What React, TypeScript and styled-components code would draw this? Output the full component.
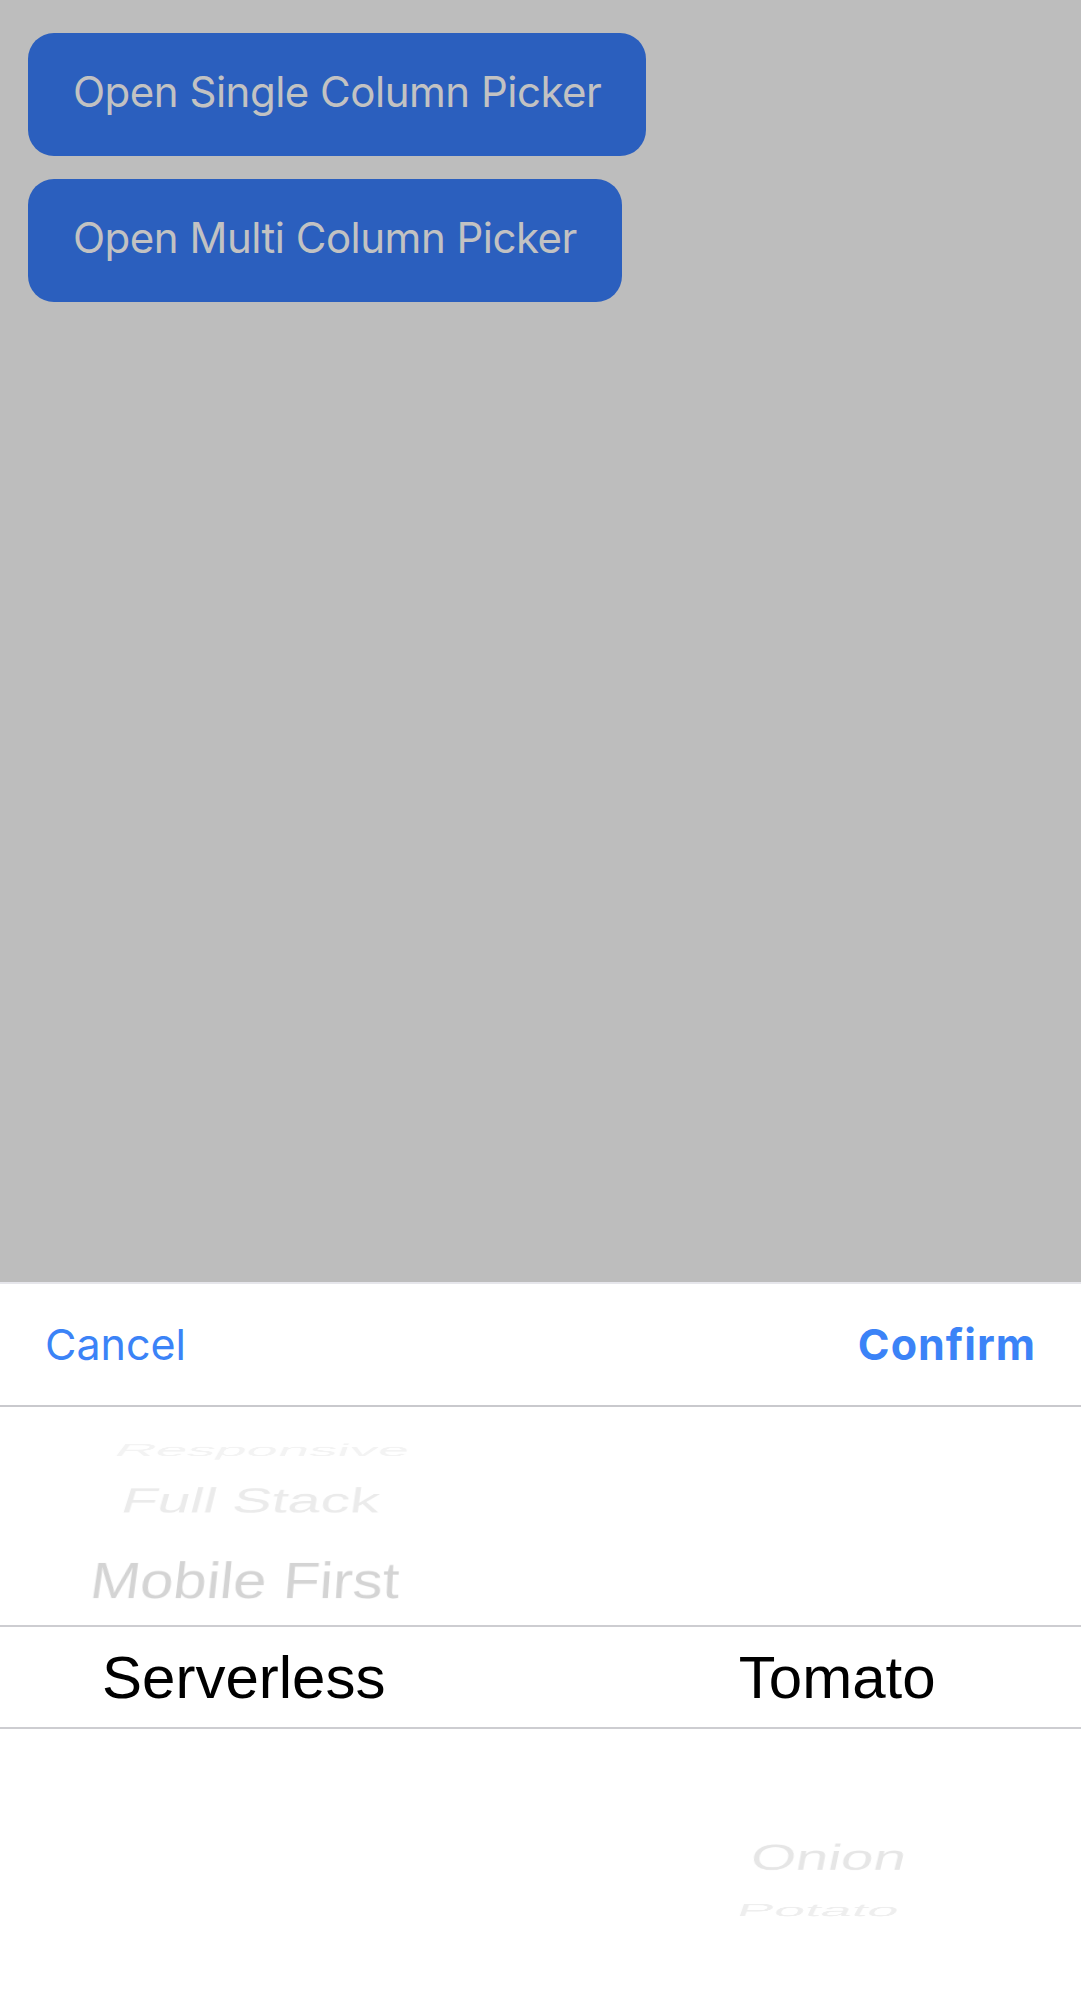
import React from "react";
import styled, { createGlobalStyle } from "styled-components";

const PERSPECTIVE = 1600;

const GlobalStyle = createGlobalStyle`
  html, body {
    margin: 0;
    padding: 0;
  }
  body {
    background: #bdbdbd;
    font-family: Inter, "Noto Sans", "Liberation Sans", sans-serif;
  }
  * {
    box-sizing: border-box;
  }
`;

const Page = styled.div`
  min-height: 100vh;
  display: flex;
  flex-direction: column;
  background: #bdbdbd;
`;

const ButtonStack = styled.div`
  display: flex;
  flex-direction: column;
  align-items: flex-start;
  gap: 23px;
  padding: 33px 0 0 28px;
`;

const ActionButton = styled.button`
  height: 123px;
  padding: 0 45px 6px;
  border: none;
  border-radius: 26px;
  background: #2b5fbe;
  color: #c2c2c2;
  font-family: Inter, "Noto Sans", sans-serif;
  font-size: 42px;
  font-weight: 400;
  letter-spacing: -0.5px;
  cursor: pointer;
`;

const Sheet = styled.div`
  margin-top: auto;
  background: #ffffff;
  border-top: 2px solid #e6e6eb;
  display: flex;
  flex-direction: column;
`;

const SheetHeader = styled.div`
  height: 123px;
  display: flex;
  align-items: center;
  justify-content: space-between;
  padding: 0 45px 2px;
  border-bottom: 2px solid #c9c9cd;
`;

const HeaderAction = styled.button<{ $strong?: boolean }>`
  background: none;
  border: none;
  padding: 0;
  color: #3b83f7;
  font-family: Inter, "Noto Sans", sans-serif;
  font-size: 43px;
  font-weight: ${(p) => (p.$strong ? 700 : 400)};
  letter-spacing: ${(p) => (p.$strong ? "1px" : "0")};
  cursor: pointer;
`;

const WheelBody = styled.div`
  height: 592px;
  display: grid;
  grid-template-columns: 1fr 1fr;
  grid-template-rows: 218px 104px 1fr;
  column-gap: 106px;
  perspective: ${PERSPECTIVE}px;
  perspective-origin: 50% 270px;
`;

const SelectionBand = styled.div`
  grid-row: 2;
  grid-column: 1 / -1;
  border-top: 2px solid #cdcdd1;
  border-bottom: 2px solid #cdcdd1;
`;

const WheelItem = styled.div<{ $column: number }>`
  grid-row: 2;
  grid-column: ${(p) => p.$column};
  display: flex;
  align-items: center;
  justify-content: center;
  font-family: "Liberation Sans", Arial, sans-serif;
  font-size: 60px;
  color: #000000;
  white-space: nowrap;
  backface-visibility: hidden;
`;

type Item = {
  label: string;
  angle: number;
  depth: number;
  offset: number;
  opacity: number;
};

const columns: Item[][] = [
  [
    { label: "Responsive", angle: 64, depth: 0.935, offset: -243, opacity: 0.05 },
    { label: "Full Stack", angle: 47, depth: 0.975, offset: -181.5, opacity: 0.08 },
    { label: "Mobile First", angle: 27, depth: 0.995, offset: -97.5, opacity: 0.17 },
    { label: "Serverless", angle: 0, depth: 1, offset: 0, opacity: 1 },
  ],
  [
    { label: "Tomato", angle: 0, depth: 1, offset: 0, opacity: 1 },
    { label: "Onion", angle: -45, depth: 0.97, offset: 185.6, opacity: 0.1 },
    { label: "Potato", angle: -63, depth: 0.935, offset: 249.2, opacity: 0.07 },
  ],
];

const itemTransform = (it: Item) => {
  const z = -PERSPECTIVE * (1 / it.depth - 1);
  return `translateY(${it.offset}px) translateZ(${z.toFixed(2)}px) rotateX(${it.angle}deg)`;
};

export default function App() {
  return (
    <>
      <GlobalStyle />
      <Page>
        <ButtonStack>
          <ActionButton>Open Single Column Picker</ActionButton>
          <ActionButton>Open Multi Column Picker</ActionButton>
        </ButtonStack>
        <Sheet>
          <SheetHeader>
            <HeaderAction>Cancel</HeaderAction>
            <HeaderAction $strong>Confirm</HeaderAction>
          </SheetHeader>
          <WheelBody>
            <SelectionBand />
            {columns.map((col, ci) =>
              col.map((it) => (
                <WheelItem
                  key={`${ci}-${it.label}`}
                  $column={ci + 1}
                  style={{ transform: itemTransform(it), opacity: it.opacity }}
                >
                  {it.label}
                </WheelItem>
              ))
            )}
          </WheelBody>
        </Sheet>
      </Page>
    </>
  );
}
